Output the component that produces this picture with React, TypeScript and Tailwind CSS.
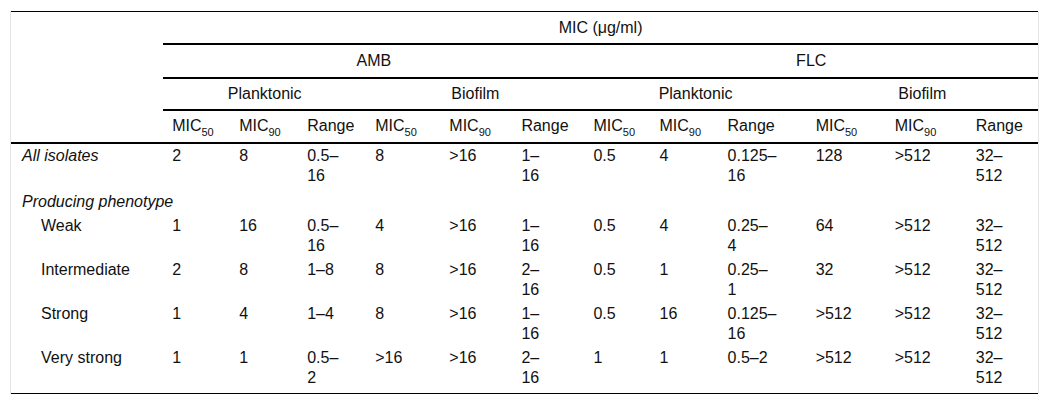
import React from "react";

const rows: { label: string; indent: boolean; italic: boolean; cells: string[] }[] = [
  {
    label: "All isolates",
    indent: false,
    italic: true,
    cells: ["2", "8", "0.5–|16", "8", ">16", "1–|16", "0.5", "4", "0.125–|16", "128", ">512", "32–|512"],
  },
  {
    label: "Weak",
    indent: true,
    italic: false,
    cells: ["1", "16", "0.5–|16", "4", ">16", "1–|16", "0.5", "4", "0.25–|4", "64", ">512", "32–|512"],
  },
  {
    label: "Intermediate",
    indent: true,
    italic: false,
    cells: ["2", "8", "1–8", "8", ">16", "2–|16", "0.5", "1", "0.25–|1", "32", ">512", "32–|512"],
  },
  {
    label: "Strong",
    indent: true,
    italic: false,
    cells: ["1", "4", "1–4", "8", ">16", "1–|16", "0.5", "16", "0.125–|16", ">512", ">512", "32–|512"],
  },
  {
    label: "Very strong",
    indent: true,
    italic: false,
    cells: ["1", "1", "0.5–|2", ">16", ">16", "2–|16", "1", "1", "0.5–2", ">512", ">512", "32–|512"],
  },
];

const widths = [152, 67, 68, 68, 74, 72, 72, 66, 68, 88, 79, 81, 71];

function Cell({ text }: { text: string }) {
  const parts = text.split("|");
  return (
    <>
      {parts.map((p, i) => (
        <React.Fragment key={i}>
          {i > 0 && <br />}
          {p}
        </React.Fragment>
      ))}
    </>
  );
}

function Mic({ n }: { n: string }) {
  return (
    <>
      MIC
      <span className="relative top-[5px] text-[11px] leading-none">{n}</span>
    </>
  );
}

export default function App() {
  const th1 = "font-normal text-center border-b-2 border-black leading-[20px]";
  const sub = ["50", "90", "R", "50", "90", "R", "50", "90", "R", "50", "90", "R"];
  return (
    <div className="bg-white w-[1049px] h-[406px]">
      <div
        className="ml-[10px] mt-[11px] w-[1029px] border-l border-r border-[#e4e4e4]"
        style={{ fontFamily: '"Liberation Sans", Arial, sans-serif' }}
      >
        <table className="table-fixed w-[1027px] border-separate border-spacing-0 border-t border-b border-black text-[16px] leading-[20px] text-[#111]">
          <colgroup>
            {widths.map((w, i) => (
              <col key={i} style={{ width: w }} />
            ))}
          </colgroup>
          <thead>
            <tr>
              <th rowSpan={4} className="border-b-2 border-black font-normal"></th>
              <th colSpan={12} className={`${th1} pt-[6px] pb-[5px]`}>
                MIC (μg/ml)
              </th>
            </tr>
            <tr>
              <th colSpan={6} className={`${th1} py-[6px]`}>
                AMB
              </th>
              <th colSpan={6} className={`${th1} py-[6px]`}>
                FLC
              </th>
            </tr>
            <tr>
              <th colSpan={3} className={`${th1} py-[5px]`}>
                Planktonic
              </th>
              <th colSpan={3} className={`${th1} py-[5px]`}>
                Biofilm
              </th>
              <th colSpan={3} className={`${th1} py-[5px]`}>
                Planktonic
              </th>
              <th colSpan={3} className={`${th1} py-[5px]`}>
                Biofilm
              </th>
            </tr>
            <tr>
              {sub.map((s, i) => (
                <th
                  key={i}
                  className="font-normal text-left pl-[9px] pt-[5px] pb-[6px] border-b-2 border-black leading-[20px] whitespace-nowrap"
                >
                  {s === "R" ? "Range" : <Mic n={s} />}
                </th>
              ))}
            </tr>
          </thead>
          <tbody>
            {rows.map((r, ri) => {
              const last = ri === rows.length - 1;
              const pad = last ? "pt-[2px] pb-[5px]" : ri === 0 ? "pt-[2px] pb-[4px]" : "py-[2px]";
              return (
                <React.Fragment key={r.label}>
                  <tr>
                    <td
                      className={`align-top ${pad} ${r.indent ? "pl-[30px]" : "pl-[11px]"} ${
                        r.italic ? "italic" : ""
                      } whitespace-nowrap`}
                    >
                      {r.label}
                    </td>
                    {r.cells.map((c, ci) => (
                      <td key={ci} className={`align-top ${pad} pl-[9px] whitespace-nowrap`}>
                        <Cell text={c} />
                      </td>
                    ))}
                  </tr>
                  {ri === 0 && (
                    <tr>
                      <td colSpan={13} className="italic pl-[11px] py-[2px] whitespace-nowrap">
                        Producing phenotype
                      </td>
                    </tr>
                  )}
                </React.Fragment>
              );
            })}
          </tbody>
        </table>
      </div>
    </div>
  );
}
